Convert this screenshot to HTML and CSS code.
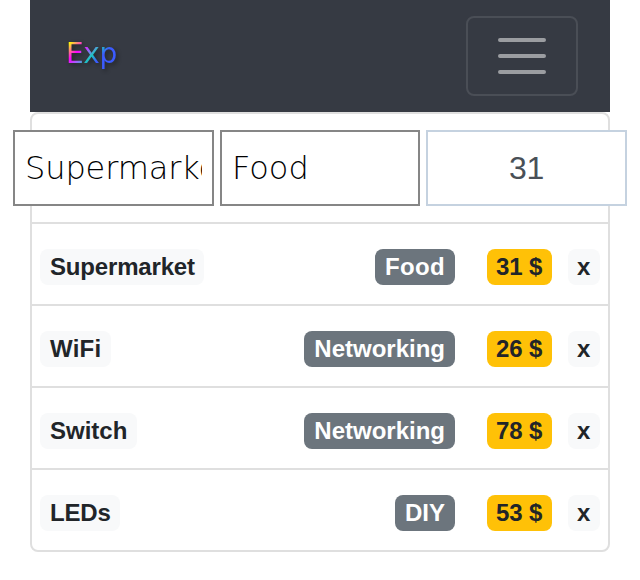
FILE: index.html
```
<!DOCTYPE html>
<html lang="en">
<head>
<meta charset="utf-8">
<title>Exp</title>
<link rel="stylesheet" href="styles.css">
</head>
<body>
<nav class="navbar">
  <a class="brand">Exp</a>
  <button class="toggler" aria-label="Menu">
    <svg width="60" height="60" viewBox="0 0 30 30"><path d="M4 7h22M4 15h22M4 23h22" stroke="rgba(255,255,255,.5)" stroke-width="2" stroke-linecap="round"/></svg>
  </button>
</nav>
<ul class="list">
  <li class="form">
    <input class="field title" value="Supermarket">
    <input class="field" value="Food">
    <input class="field amount" value="31">
  </li>
  <li class="row"><span class="badge name long">Supermarket</span><span class="badge category short">Food</span><span class="badge price">31 $</span><span class="badge remove">x</span></li>
  <li class="row"><span class="badge name wide">WiFi</span><span class="badge category">Networking</span><span class="badge price">26 $</span><span class="badge remove">x</span></li>
  <li class="row"><span class="badge name">Switch</span><span class="badge category">Networking</span><span class="badge price">78 $</span><span class="badge remove">x</span></li>
  <li class="row"><span class="badge name caps">LEDs</span><span class="badge category">DIY</span><span class="badge price">53 $</span><span class="badge remove">x</span></li>
</ul>
</body>
</html>
```
FILE: styles.css
```
* { box-sizing: border-box; }
body {
  margin: 0;
  padding: 0 30px;
  background: #fff;
  color: #212529;
  font-family: "Liberation Sans", sans-serif;
  overflow: hidden;
}
.navbar {
  height: 112px;
  padding: 0 32px 0 36px;
  display: flex;
  align-items: center;
  justify-content: space-between;
  background: #363a43;
}
.brand {
  margin-bottom: 4px;
  font: 28px/42px "DejaVu Sans", sans-serif;
  letter-spacing: -0.4px;
  color: transparent;
  background: linear-gradient(135deg, #ff0 14%, #f0f 32%, #a55cff 42%, #1cc8c0 52%, #3b5bff 63%);
  -webkit-background-clip: text;
  background-clip: text;
  filter: drop-shadow(2px 2px 2px rgba(0, 0, 0, .4));
}
.toggler {
  width: 112px;
  height: 80px;
  padding: 0;
  display: grid;
  place-items: center;
  background: transparent;
  border: 2px solid rgba(255, 255, 255, .1);
  border-radius: 8px;
}
.list {
  margin: 0;
  padding: 0;
  list-style: none;
  border: 2px solid #dfdfdf;
  border-radius: 8px;
}
.form {
  height: 108px;
  margin: 0 -19px;
  display: flex;
  align-items: center;
  gap: 6px;
}
.field {
  width: 200px;
  min-width: 0;
  height: 76px;
  padding: 0 10px;
  border: 2px solid #868686;
  border-radius: 0;
  background: #fff;
  color: #000;
  font: 200 32px "DejaVu Sans", sans-serif;
}
.title {
  width: 201px;
  letter-spacing: -0.1px;
}
.amount {
  width: 201px;
  padding: 0 10px;
  border-color: #c5d2e0;
  color: #495057;
  font: 32px "Liberation Sans", sans-serif;
  letter-spacing: -0.4px;
  text-align: center;
}
.row {
  height: 82px;
  padding: 6px 8px 0;
  display: flex;
  align-items: center;
  border-top: 2px solid #dfdfdf;
}
.badge {
  height: 36px;
  padding: 6px 10px;
  border-radius: 8px;
  font-size: 24px;
  font-weight: 700;
  line-height: 24px;
  white-space: nowrap;
}
.name, .remove { background: #f8f9fa; }
.long { width: 164px; letter-spacing: -0.17px; }
.wide { width: 71px; letter-spacing: 0.25px; }
.caps { width: 80px; letter-spacing: -0.2px; }
.category {
  margin-left: auto;
  color: #fff;
  background: #6c757d;
}
.short { width: 80px; letter-spacing: 0.3px; }
.price {
  width: 65px;
  margin: 0 16px 0 32px;
  padding: 6px 9px;
  background: #ffc107;
  letter-spacing: -0.1px;
}
.remove {
  width: 32px;
  padding: 6px 9px;
}
```
